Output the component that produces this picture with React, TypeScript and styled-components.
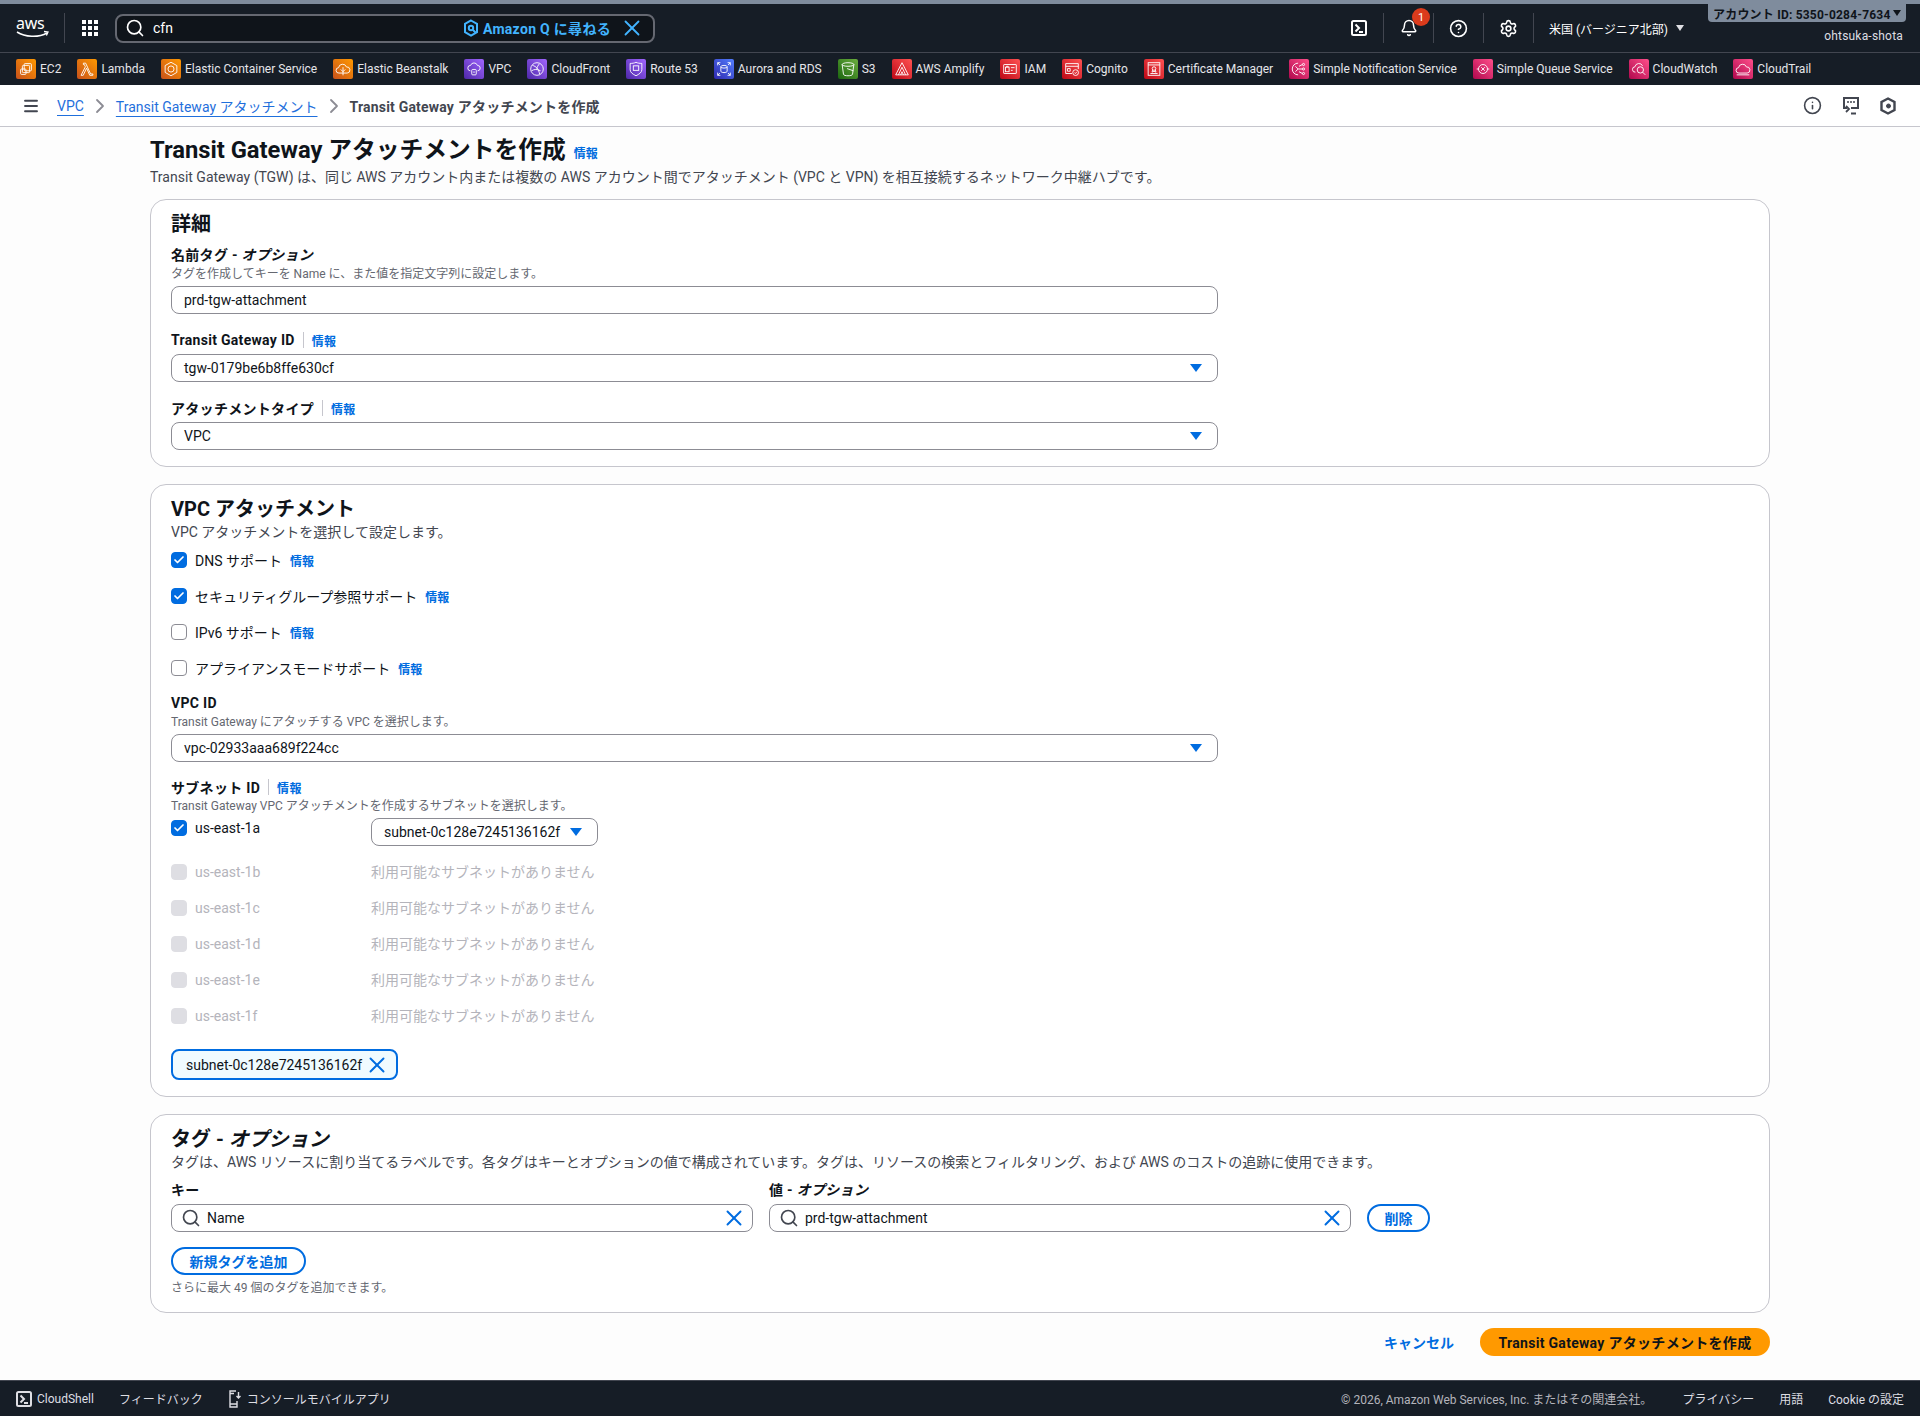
import React from 'react';
import styled, { createGlobalStyle } from 'styled-components';
import { Bell, Menu, Settings, CircleHelp, Info, ChevronRight, Search, X, Check } from 'lucide-react';

const GlobalStyle = createGlobalStyle`
  html, body { margin: 0; padding: 0; }
  body {
    font-family: Roboto, "Noto Sans CJK JP", sans-serif;
    font-size: 14px;
    color: #0f141a;
    background: #fdfdfd;
  }
  * { box-sizing: border-box; }
`;

const Page = styled.div`
  width: 1920px;
  height: 1416px;
  display: flex;
  flex-direction: column;
  overflow: hidden;
`;

// top navigation
const TopBar = styled.header`
  height: 53px;
  background: #161d26;
  border-top: 4px solid #7f8c9d;
  border-bottom: 1px solid #424650;
  display: flex;
  align-items: center;
  position: relative;
  color: #fff;
`;

const Logo = styled.div`
  width: 65px;
  height: 30px;
  padding-left: 16px;
  border-right: 1px solid #424650;
  display: flex;
  align-items: center;
`;

const GridButton = styled.div`
  width: 50px;
  display: flex;
  justify-content: center;
`;

const SearchBox = styled.div`
  width: 540px;
  height: 29px;
  background: #0f141a;
  border: 2px solid #656871;
  border-radius: 8px;
  display: flex;
  align-items: center;
  padding: 0 8px;
  color: #fff;
`;

const SearchText = styled.span`
  margin-left: 8px;
  flex: 1;
  font-size: 14px;
`;

const AskQ = styled.span`
  display: flex;
  align-items: center;
  gap: 4px;
  color: #42b4ff;
  font-weight: 700;
  font-size: 14px;
  letter-spacing: 0.3px;
  margin-right: 8px;
`;

const TopRight = styled.div`
  margin-left: auto;
  display: flex;
  align-items: center;
  height: 30px;
`;

const TopIcon = styled.div`
  width: 50px;
  height: 30px;
  display: flex;
  align-items: center;
  justify-content: center;
  border-right: 1px solid #424650;
  position: relative;
`;

const Badge = styled.span`
  position: absolute;
  top: -5px;
  right: 3px;
  width: 18px;
  height: 18px;
  border-radius: 50%;
  background: #db3b1c;
  color: #fff;
  font-size: 11px;
  display: flex;
  align-items: center;
  justify-content: center;
`;

const Region = styled.div`
  width: 386px;
  padding-left: 15px;
  font-size: 12px;
  display: flex;
  align-items: center;
  gap: 8px;
  white-space: nowrap;
`;

const Caret = styled.span<{ $color: string; $w: number; $h: number }>`
  width: 0;
  height: 0;
  display: inline-block;
  flex: none;
  border-left: ${(p) => p.$w / 2}px solid transparent;
  border-right: ${(p) => p.$w / 2}px solid transparent;
  border-top: ${(p) => p.$h}px solid ${(p) => p.$color};
`;

const SelectCaret = styled(Caret)`
  margin-right: 3px;
`;

const AccountTag = styled.div`
  position: absolute;
  top: 0;
  right: 14px;
  height: 18px;
  width: 198px;
  padding: 0 5px;
  background: #7f8c9d;
  border-radius: 0 0 4px 4px;
  color: #0f141a;
  font-size: 12px;
  font-weight: 700;
  letter-spacing: 0.2px;
  display: flex;
  align-items: center;
  justify-content: space-between;
  white-space: nowrap;
`;

const UserName = styled.div`
  position: absolute;
  top: 25px;
  right: 17px;
  font-size: 12px;
  letter-spacing: 0.2px;
  color: #dedee3;
`;

// favorites bar
const ServiceBar = styled.nav`
  height: 32px;
  padding-bottom: 1px;
  background: #161d26;
  display: flex;
  align-items: center;
  padding-left: 16px;
  gap: 16px;
  color: #e6e6ea;
  font-size: 12px;
  white-space: nowrap;
`;

const ServiceItem = styled.div`
  display: flex;
  align-items: center;
  gap: 4px;
`;

const ServiceIcon = styled.span<{ $from: string; $to: string }>`
  width: 20px;
  height: 20px;
  border-radius: 2px;
  display: flex;
  align-items: center;
  justify-content: center;
  background: linear-gradient(to top right, ${(p) => p.$from}, ${(p) => p.$to});
  color: #fff;
`;

// breadcrumbs
const CrumbBar = styled.div`
  height: 42px;
  background: #fff;
  border-bottom: 1px solid #c6c6cd;
  display: flex;
  align-items: center;
  padding-left: 22px;
  font-size: 14px;
`;

const MenuWrap = styled.span`
  display: flex;
  margin-right: 17px;
  color: #424650;
`;

const CrumbLink = styled.span`
  color: #1f6fdc;
  text-decoration: underline;
  text-underline-offset: 4px;
`;

const CrumbCurrent = styled.span`
  color: #424650;
  font-weight: 700;
  letter-spacing: 0.2px;
`;

const CrumbSep = styled.span`
  width: 32px;
  display: flex;
  justify-content: center;
  color: #8c8c94;
`;

const CrumbTools = styled.div`
  margin-left: auto;
  display: flex;
  align-items: center;
  gap: 20px;
  padding-right: 24px;
  color: #424650;
`;

// main column
const Main = styled.main`
  flex: 1;
  padding: 8px 150px 0;
`;

const TitleRow = styled.div`
  display: flex;
  align-items: baseline;
  gap: 8px;
  height: 30px;
`;

const Title = styled.h1`
  margin: 0;
  font-size: 23.75px;
  line-height: 30px;
  font-weight: 700;
`;

const InfoLink = styled.a`
  color: #006ce0;
  font-size: 12px;
  font-weight: 700;
`;

const Lead = styled.p`
  margin: 2px 0 12px;
  font-size: 14px;
  line-height: 20px;
  color: #424650;
`;

const Card = styled.section<{ $pb: number }>`
  background: #fff;
  border: 1px solid #c6c6cd;
  border-radius: 16px;
  padding: 12px 20px ${(p) => p.$pb}px;
  margin-bottom: 17px;
`;

const CardTitle = styled.h2`
  margin: 0;
  font-size: 20px;
  line-height: 24px;
  font-weight: 700;
`;

const CardDesc = styled.p<{ $mb: number }>`
  margin: 1px 0 ${(p) => p.$mb}px;
  font-size: 14px;
  line-height: 20px;
  color: #424650;
`;

const Field = styled.div<{ $mt: number }>`
  margin-top: ${(p) => p.$mt}px;
  width: 1047px;
`;

const LabelRow = styled.div`
  display: flex;
  align-items: center;
  height: 18px;
  font-size: 14px;
  font-weight: 700;
  letter-spacing: 0.3px;
  white-space: pre;
`;

const LabelDivider = styled.span`
  width: 1px;
  height: 16px;
  margin: 0 8px;
  background: #c6c6cd;
`;

const Hint = styled.div<{ $mt: number }>`
  margin-top: ${(p) => p.$mt}px;
  font-size: 12px;
  line-height: 16px;
  color: #656871;
`;

const Input = styled.div<{ $mt: number }>`
  height: 28px;
  margin-top: ${(p) => p.$mt}px;
  padding: 0 12px;
  background: #fff;
  border: 1px solid #8c8c94;
  border-radius: 8px;
  font-size: 14px;
  display: flex;
  align-items: center;
  gap: 8px;
  justify-content: space-between;
  white-space: nowrap;
`;

const CheckRow = styled.div`
  display: flex;
  align-items: center;
  height: 20px;
  margin-bottom: 16px;
  gap: 8px;
`;

const CheckBox = styled.span<{ $state: 'on' | 'off' | 'disabled' }>`
  width: 16px;
  height: 16px;
  flex: none;
  border-radius: 4px;
  display: flex;
  align-items: center;
  justify-content: center;
  color: #fff;
  background: ${(p) => (p.$state === 'on' ? '#006ce0' : p.$state === 'disabled' ? '#dedee3' : '#fff')};
  border: 1px solid ${(p) => (p.$state === 'on' ? '#006ce0' : p.$state === 'disabled' ? '#dedee3' : '#8c8c94')};
`;

const SubnetGrid = styled.div`
  display: grid;
  grid-template-columns: 200px 227px;
  margin-top: 4px;
  align-items: start;
  row-gap: 16px;
`;

const ZoneLabel = styled.div<{ $disabled?: boolean }>`
  display: flex;
  align-items: center;
  gap: 8px;
  height: 20px;
  color: ${(p) => (p.$disabled ? '#b4b4bb' : '#0f141a')};
`;

const NoSubnet = styled.div`
  color: #b4b4bb;
  line-height: 20px;
  white-space: nowrap;
`;

const Token = styled.div`
  margin-top: 23px;
  width: 227px;
  height: 31px;
  padding: 0 6px 0 13px;
  background: #f0fbff;
  border: 2px solid #006ce0;
  border-radius: 8px;
  display: flex;
  align-items: center;
  justify-content: space-between;
  white-space: nowrap;
`;

const TagGrid = styled.div`
  display: grid;
  grid-template-columns: 582px 582px 63px;
  column-gap: 16px;
  margin-top: 8px;
  align-items: end;
`;

const InputGroup = styled.div`
  display: flex;
  align-items: center;
  gap: 6px;
  margin-left: -3px;
`;

const ClearIcon = styled(X)`
  margin-right: -7px;
`;

const PillButton = styled.div<{ $w: number }>`
  width: ${(p) => p.$w}px;
  height: 28px;
  border: 2px solid #006ce0;
  border-radius: 14px;
  color: #006ce0;
  font-weight: 700;
  display: flex;
  align-items: center;
  justify-content: center;
  background: #fff;
`;

const AddRow = styled.div`
  margin-top: 15px;
`;

const Actions = styled.div`
  display: flex;
  justify-content: flex-end;
  align-items: center;
  gap: 26px;
  margin-top: -2px;
`;

const Cancel = styled.span`
  color: #006ce0;
  font-weight: 700;
`;

const Primary = styled.div`
  width: 290px;
  height: 28px;
  border-radius: 14px;
  background: #ff9900;
  font-weight: 700;
  letter-spacing: 0.3px;
  display: flex;
  align-items: center;
  justify-content: center;
`;

// footer
const Footer = styled.footer`
  height: 36px;
  background: #161d26;
  border-top: 1px solid #424650;
  color: #dedee3;
  font-size: 12px;
  display: flex;
  align-items: center;
  padding: 0 16px;
  white-space: nowrap;
`;

const FootItem = styled.span`
  display: flex;
  align-items: center;
  gap: 5px;
  margin-right: 25px;
`;

const FootRight = styled.div`
  margin-left: auto;
  display: flex;
  gap: 25px;
`;

const Muted = styled.span`
  color: #b4b4bb;
  margin-right: 5px;
`;

const ORANGE = ['#c8511b', '#ff9900'];
const PURPLE = ['#4d27a8', '#a166ff'];
const BLUE = ['#2e27ad', '#527fff'];
const GREEN = ['#1b660f', '#6cae3e'];
const RED = ['#bd0816', '#ff5252'];
const PINK = ['#b0084d', '#ff4f8b'];

const CLOUD = 'M5.5 14.5a3 3 0 0 1-.4-6 4.5 4.5 0 0 1 8.7-.8 3.4 3.4 0 0 1 .9 6.8z';

// small hand-drawn versions of the service glyphs
const services: { name: string; c: string[]; g: React.ReactNode }[] = [
  { name: 'EC2', c: ORANGE, g: <><rect x="8" y="4" width="8" height="8" rx="1" /><rect x="6" y="6" width="8" height="8" rx="1" /><rect x="4" y="10" width="6" height="6" rx="1" /></> },
  { name: 'Lambda', c: ORANGE, g: <path d="M6 3.5h2.5L14 15.5h2.5v1.5h-3.4L9.5 9 5.8 17H3.4l4.8-9.5L7 5H6z" /> },
  { name: 'Elastic Container Service', c: ORANGE, g: <><path d="M10 2.5l6.5 3.7v7.6L10 17.5l-6.5-3.7V6.2z" /><circle cx="10" cy="10" r="3.4" /></> },
  { name: 'Elastic Beanstalk', c: ORANGE, g: <><path d={CLOUD} /><path d="M10 8v9M7.5 10.5L10 13l2.5-2.5" /></> },
  { name: 'VPC', c: PURPLE, g: <><path d="M6 12a3 3 0 0 1 .2-6 4 4 0 0 1 7.6 0 3 3 0 0 1 .2 6" /><rect x="7.5" y="10.5" width="5" height="6" rx="1" /><path d="M10 12.5v2" /></> },
  { name: 'CloudFront', c: PURPLE, g: <><circle cx="10" cy="10" r="7" /><path d="M5 6c4 1 7 4 8 10M4 12c3-2 6-2 10 0M13 4c-2 2-3 4-3 6" /></> },
  { name: 'Route 53', c: PURPLE, g: <><path d="M10 2.5c2 1 4 1.3 6.5 1.3v7c0 3-3 5-6.5 6.7-3.500-1.700-6.500-3.700-6.500-6.700v-7C6 3.800 8 3.500 10 2.500z" /><rect x="7" y="6.500" width="6" height="5" /></> },
  { name: 'Aurora and RDS', c: BLUE, g: <><ellipse cx="10" cy="7.500" rx="3.500" ry="1.500" /><path d="M6.500 7.500v5c0 .8 1.600 1.500 3.500 1.500s3.500-.7 3.500-1.500v-5" /><path d="M3 6V3h3M14 3h3v3M17 14v3h-3M6 17H3v-3M3 3l2.500 2.500M17 3l-2.500 2.500M17 17l-2.500-2.500M3 17l2.500-2.500" /></> },
  { name: 'S3', c: GREEN, g: <><ellipse cx="10" cy="5" rx="6.500" ry="2" /><path d="M3.500 5l1.500 11c.3 1 2.500 1.500 5 1.500s4.700-.5 5-1.500l1.500-11" /><path d="M9 9.500l7 2.500" /></> },
  { name: 'AWS Amplify', c: RED, g: <path d="M10 3l7 13.500H3zM10 8l4 8.500M10 8l-4 8.500M8.500 16.500L10 13l1.500 3.500" /> },
  { name: 'IAM', c: RED, g: <><rect x="3" y="5" width="14" height="10" rx=".5" /><rect x="5" y="8" width="4" height="5" /><path d="M6 8V7h2v1M11 8.500h4M11 11.500h2" /></> },
  { name: 'Cognito', c: RED, g: <><path d="M10 15H3V4h14v6M3 7h14M5 9.500h3v3H5z" /><circle cx="14" cy="14" r="3.200" /><path d="M12.800 14l1 1 1.500-1.800" /></> },
  { name: 'Certificate Manager', c: RED, g: <><rect x="3.500" y="3" width="13" height="14" /><path d="M3.500 5.500h13M6 15h8" /><circle cx="10" cy="9.500" r="2" /><path d="M8.500 11l-.7 2.500 2.200-1 2.200 1-.7-2.500" /></> },
  { name: 'Simple Notification Service', c: PINK, g: <><path d="M9 3.500a6.500 6.500 0 1 0 0 13" /><circle cx="15" cy="5" r="1.200" /><circle cx="15" cy="10" r="1.200" /><circle cx="15" cy="15" r="1.200" /><path d="M9 10h4.800M6 7l3 3-3 3M10 7l3.800-2M10 13l3.800 2" /></> },
  { name: 'Simple Queue Service', c: PINK, g: <><circle cx="10" cy="10" r="5" /><path d="M3 10h2M15 10h2M8 8l4 4M12 8l-4 4" /></> },
  { name: 'CloudWatch', c: PINK, g: <><path d="M6 13.500a3 3 0 0 1-.5-6 4.500 4.500 0 0 1 8.500-1" /><circle cx="11.500" cy="11" r="3.500" /><path d="M14 13.500l3 3" /></> },
  { name: 'CloudTrail', c: PINK, g: <><path d={CLOUD} /><path d="M3 16.500h14" /></> },
];

const AwsLogo = () => (
  <svg width="40" height="34" viewBox="0 0 40 34">
    <text x="0" y="18" fontFamily="Noto Sans" fontSize="16" fill="#fff" letterSpacing="-0.3">aws</text>
    <path d="M1 21c8 5 21 6 30 1" fill="none" stroke="#fff" strokeWidth="1.6" />
    <path d="M28 20.500l4 .5-1.600 3.600" fill="none" stroke="#fff" strokeWidth="1.300" />
  </svg>
);

const GridIcon = () => (
  <svg width="16" height="16" viewBox="0 0 16 16" fill="#fff">
    {[0, 6, 12].map((y) => [0, 6, 12].map((x) => <rect key={`${x}-${y}`} x={x} y={y} width="4" height="4" />))}
  </svg>
);

const QIcon = () => (
  <svg width="16" height="18" viewBox="0 0 16 18" fill="none" stroke="currentColor" strokeWidth="2">
    <path d="M8 1.500l6 3.400v8.200l-6 3.400-6-3.400V4.900z" />
    <circle cx="8" cy="9" r="2.200" />
    <path d="M10 11l2.500 2.500" />
  </svg>
);

const TerminalIcon = () => (
  <svg width="16" height="16" viewBox="0 0 16 16" fill="none" stroke="currentColor" strokeWidth="2">
    <rect x="1" y="1" width="14" height="14" rx="1.500" />
    <path d="M4.500 4.500L8 8l-3.500 3.500M8 12h4" />
  </svg>
);

const FeedbackIcon = () => (
  <svg width="18" height="19" viewBox="0 0 18 19" fill="none" stroke="currentColor" strokeWidth="2">
    <path d="M5 12H2V2h14v10H9" />
    <path d="M5 6h2M8 6h2M11 6h2" strokeWidth="1.600" />
    <path d="M4 10l3 3-3 3M9 17.500h5" strokeWidth="1.800" />
  </svg>
);

const MobileIcon = () => (
  <svg width="14" height="18" viewBox="0 0 14 18" fill="none" stroke="currentColor" strokeWidth="1.400">
    <path d="M8 1H2v16h7v-6M2 14h7M2 3.500h4" />
    <path d="M10.500 2v6M8.500 6l2 2 2-2" />
  </svg>
);

const HexQ = () => (
  <svg width="16" height="18" viewBox="0 0 16 18" fill="none" stroke="currentColor" strokeWidth="2.400">
    <path d="M8 1.500l6.500 3.500v8L8 16.500 1.500 13V5z" />
    <circle cx="8.500" cy="9" r="2" fill="currentColor" strokeWidth="1" />
  </svg>
);

const SelectArrow = () => <SelectCaret $color="#006ce0" $w={12} $h={8} />;

const Tick = () => <Check size={12} strokeWidth={3.5} />;

const Label = ({ text, info, optional }: { text: string; info?: boolean; optional?: boolean }) => (
  <LabelRow>
    {text}
    {optional && <> - <em>オプション</em></>}
    {info && (
      <>
        <LabelDivider />
        <InfoLink>情報</InfoLink>
      </>
    )}
  </LabelRow>
);

const zones = ['us-east-1b', 'us-east-1c', 'us-east-1d', 'us-east-1e', 'us-east-1f'];

const checks = [
  { text: 'DNS サポート', on: true },
  { text: 'セキュリティグループ参照サポート', on: true },
  { text: 'IPv6 サポート', on: false },
  { text: 'アプライアンスモードサポート', on: false },
];

const App: React.FC = () => (
  <Page>
    <GlobalStyle />
    <TopBar>
      <Logo><AwsLogo /></Logo>
      <GridButton><GridIcon /></GridButton>
      <SearchBox>
        <Search size={20} strokeWidth={2} />
        <SearchText>cfn</SearchText>
        <AskQ><QIcon />Amazon Q に尋ねる</AskQ>
        <X size={26} color="#42b4ff" strokeWidth={1.7} />
      </SearchBox>
      <TopRight>
        <TopIcon><TerminalIcon /></TopIcon>
        <TopIcon><Bell size={18} strokeWidth={2} /><Badge>1</Badge></TopIcon>
        <TopIcon><CircleHelp size={19} strokeWidth={2} /></TopIcon>
        <TopIcon><Settings size={19} strokeWidth={2} /></TopIcon>
        <Region>米国 (バージニア北部) <Caret $color="#dedee3" $w={8} $h={6} /></Region>
      </TopRight>
      <AccountTag>アカウント ID: 5350-0284-7634 <Caret $color="#0f141a" $w={8} $h={6} /></AccountTag>
      <UserName>ohtsuka-shota</UserName>
    </TopBar>

    <ServiceBar>
      {services.map(({ name, c, g }) => (
        <ServiceItem key={name}>
          <ServiceIcon $from={c[0]} $to={c[1]}>
            <svg width="18" height="18" viewBox="0 0 20 20" fill="none" stroke="currentColor" strokeWidth="1">{g}</svg>
          </ServiceIcon>
          {name}
        </ServiceItem>
      ))}
    </ServiceBar>

    <CrumbBar>
      <MenuWrap><Menu size={18} strokeWidth={2.5} /></MenuWrap>
      <CrumbLink>VPC</CrumbLink>
      <CrumbSep><ChevronRight size={24} strokeWidth={1.8} /></CrumbSep>
      <CrumbLink>Transit Gateway アタッチメント</CrumbLink>
      <CrumbSep><ChevronRight size={24} strokeWidth={1.8} /></CrumbSep>
      <CrumbCurrent>Transit Gateway アタッチメントを作成</CrumbCurrent>
      <CrumbTools>
        <Info size={19} strokeWidth={2} />
        <FeedbackIcon />
        <HexQ />
      </CrumbTools>
    </CrumbBar>

    <Main>
      <TitleRow>
        <Title>Transit Gateway アタッチメントを作成</Title>
        <InfoLink>情報</InfoLink>
      </TitleRow>
      <Lead>Transit Gateway (TGW) は、同じ AWS アカウント内または複数の AWS アカウント間でアタッチメント (VPC と VPN) を相互接続するネットワーク中継ハブです。</Lead>

      <Card $pb={16}>
        <CardTitle>詳細</CardTitle>
        <Field $mt={9}>
          <Label text="名前タグ" optional />
          <Hint $mt={3}>タグを作成してキーを Name に、また値を指定文字列に設定します。</Hint>
          <Input $mt={4}>prd-tgw-attachment</Input>
        </Field>
        <Field $mt={17}>
          <Label text="Transit Gateway ID" info />
          <Input $mt={5}>tgw-0179be6b8ffe630cf<SelectArrow /></Input>
        </Field>
        <Field $mt={17}>
          <Label text="アタッチメントタイプ" info />
          <Input $mt={5}>VPC<SelectArrow /></Input>
        </Field>
      </Card>

      <Card $pb={16}>
        <CardTitle>VPC アタッチメント</CardTitle>
        <CardDesc $mb={8}>VPC アタッチメントを選択して設定します。</CardDesc>
        {checks.map((c) => (
          <CheckRow key={c.text}>
            <CheckBox $state={c.on ? 'on' : 'off'}>{c.on && <Tick />}</CheckBox>
            {c.text}
            <InfoLink>情報</InfoLink>
          </CheckRow>
        ))}
        <Field $mt={2}>
          <Label text="VPC ID" />
          <Hint $mt={2}>Transit Gateway にアタッチする VPC を選択します。</Hint>
          <Input $mt={4}>vpc-02933aaa689f224cc<SelectArrow /></Input>
        </Field>
        <Field $mt={16}>
          <Label text="サブネット ID" info />
          <Hint $mt={2}>Transit Gateway VPC アタッチメントを作成するサブネットを選択します。</Hint>
          <SubnetGrid>
            <ZoneLabel><CheckBox $state="on"><Tick /></CheckBox>us-east-1a</ZoneLabel>
            <Input $mt={0}>subnet-0c128e7245136162f<SelectArrow /></Input>
            {zones.map((z) => (
              <React.Fragment key={z}>
                <ZoneLabel $disabled><CheckBox $state="disabled" />{z}</ZoneLabel>
                <NoSubnet>利用可能なサブネットがありません</NoSubnet>
              </React.Fragment>
            ))}
          </SubnetGrid>
          <Token>subnet-0c128e7245136162f<X size={26} color="#006ce0" strokeWidth={1.8} /></Token>
        </Field>
      </Card>

      <Card $pb={16}>
        <CardTitle>タグ - <em>オプション</em></CardTitle>
        <CardDesc $mb={0}>タグは、AWS リソースに割り当てるラベルです。各タグはキーとオプションの値で構成されています。タグは、リソースの検索とフィルタリング、および AWS のコストの追跡に使用できます。</CardDesc>
        <TagGrid>
          <div>
            <Label text="キー" />
            <Input $mt={6}>
              <InputGroup><Search size={20} color="#424650" />Name</InputGroup>
              <ClearIcon size={26} color="#006ce0" strokeWidth={1.8} />
            </Input>
          </div>
          <div>
            <Label text="値" optional />
            <Input $mt={6}>
              <InputGroup><Search size={20} color="#424650" />prd-tgw-attachment</InputGroup>
              <ClearIcon size={26} color="#006ce0" strokeWidth={1.8} />
            </Input>
          </div>
          <PillButton $w={63}>削除</PillButton>
        </TagGrid>
        <AddRow><PillButton $w={135}>新規タグを追加</PillButton></AddRow>
        <Hint $mt={5}>さらに最大 49 個のタグを追加できます。</Hint>
      </Card>

      <Actions>
        <Cancel>キャンセル</Cancel>
        <Primary>Transit Gateway アタッチメントを作成</Primary>
      </Actions>
    </Main>

    <Footer>
      <FootItem><TerminalIcon />CloudShell</FootItem>
      <FootItem>フィードバック</FootItem>
      <FootItem><MobileIcon />コンソールモバイルアプリ</FootItem>
      <FootRight>
        <Muted>© 2026, Amazon Web Services, Inc. またはその関連会社。</Muted>
        <span>プライバシー</span>
        <span>用語</span>
        <span>Cookie の設定</span>
      </FootRight>
    </Footer>
  </Page>
);

export default App;
